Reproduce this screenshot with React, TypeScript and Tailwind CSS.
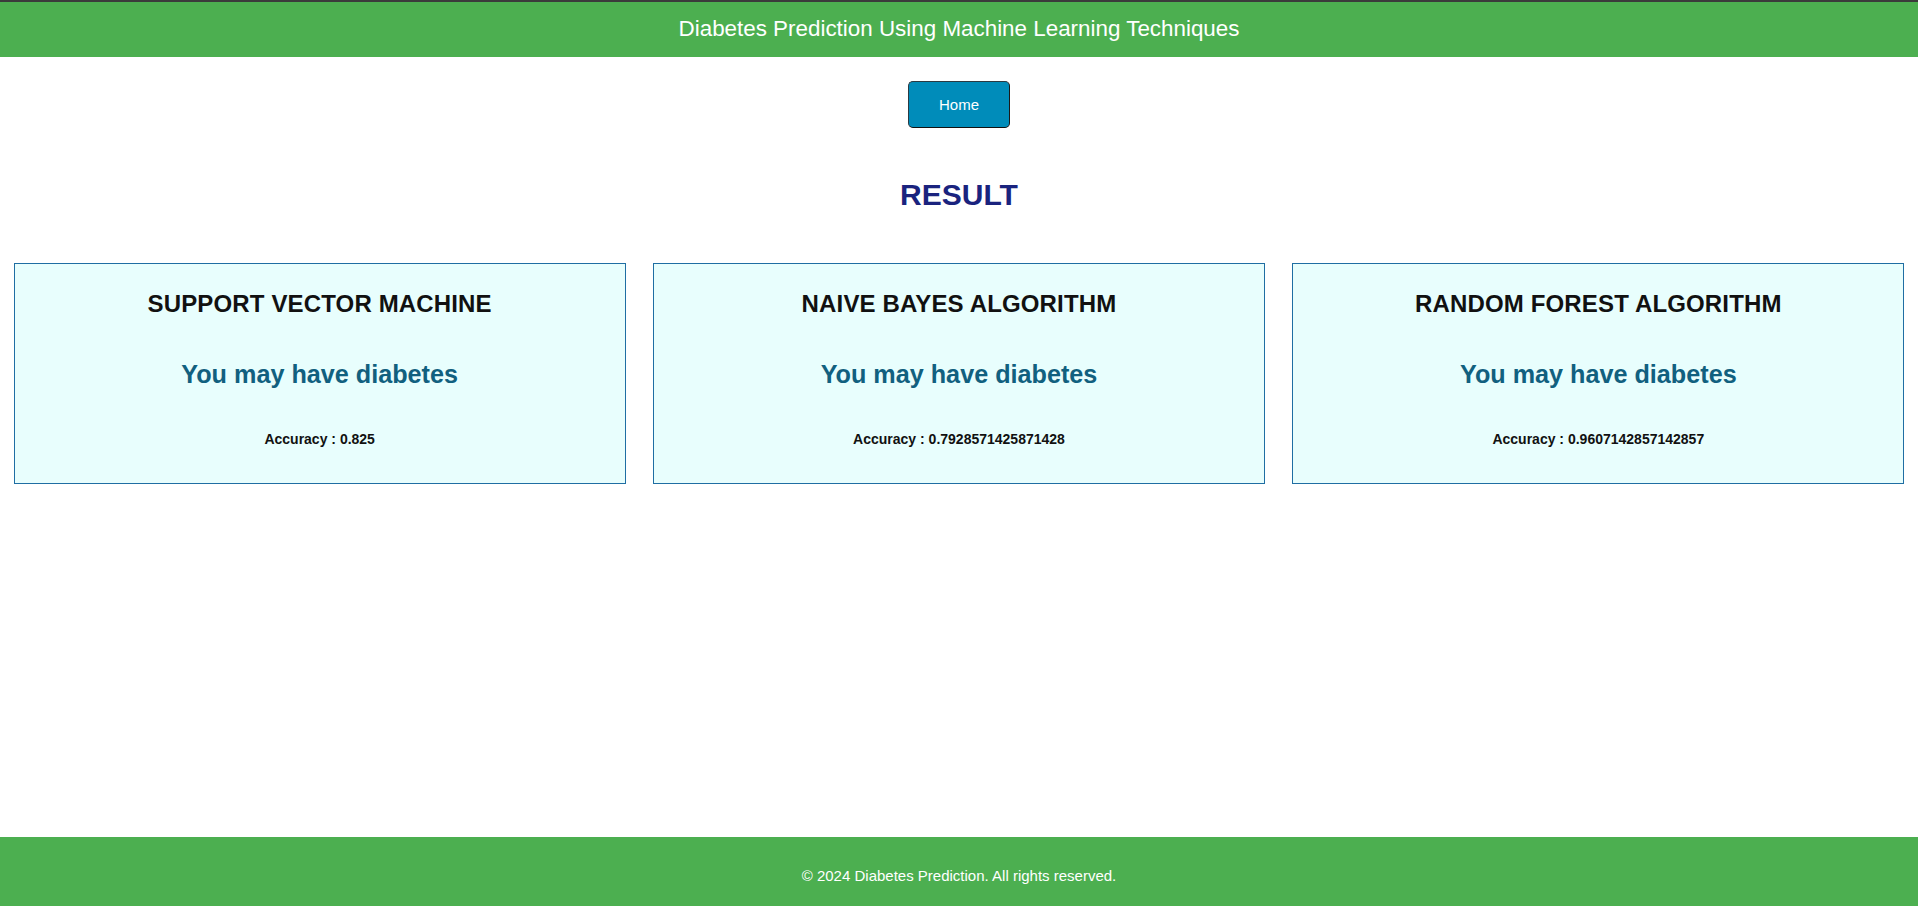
const results = [
  { name: 'SUPPORT VECTOR MACHINE', prediction: 'You may have diabetes', accuracy: '0.825' },
  { name: 'NAIVE BAYES ALGORITHM', prediction: 'You may have diabetes', accuracy: '0.7928571425871428' },
  { name: 'RANDOM FOREST ALGORITHM', prediction: 'You may have diabetes', accuracy: '0.9607142857142857' },
]

export default function App() {
  return (
    <div className="h-screen overflow-hidden flex flex-col bg-white font-['Liberation_Sans',Arial,sans-serif]">
      {/* Header */}
      <header className="border-t-2 border-[#3b3b3b] bg-[#4CAF50] pt-[14px] pb-[15px] text-center">
        <h1 className="text-white text-[22.4px] leading-[25.8px]">
          Diabetes Prediction Using Machine Learning Techniques
        </h1>
      </header>

      {/* Nav */}
      <div className="flex justify-center mt-[24px]">
        <button className="bg-[#008CBA] text-white text-[15px] leading-[17px] px-[30px] py-[14px] rounded-[5px] border border-[#2b3a42] border-b-[#111] border-r-[#1a1a1a]">
          Home
        </button>
      </div>

      <h2 className="mt-[50px] text-center text-[#1a237e] text-[30px] leading-[34px] font-bold">
        RESULT
      </h2>

      {/* Result cards */}
      <div className="mt-[51px] flex justify-around">
        {results.map(r => (
          <div
            key={r.name}
            className="w-[612px] h-[221px] bg-[#e8fefd] border border-[#1f6ea3] pt-[26px] text-center"
          >
            <h3 className="text-[#111] text-[24px] leading-[28px] font-bold tracking-[0.15px]">{r.name}</h3>
            <p className="mt-[42px] text-[#11607f] text-[25.2px] leading-[29px] font-bold">{r.prediction}</p>
            <p className="mt-[42px] text-[#111] text-[14px] leading-[16px] font-bold">Accuracy : {r.accuracy}</p>
          </div>
        ))}
      </div>

      <div className="flex-1" />

      {/* Footer */}
      <footer className="h-[69px] shrink-0 bg-[#4CAF50] pt-[30px] text-center">
        <p className="text-white text-[15px] leading-[17px]">© 2024 Diabetes Prediction. All rights reserved.</p>
      </footer>
    </div>
  )
}
